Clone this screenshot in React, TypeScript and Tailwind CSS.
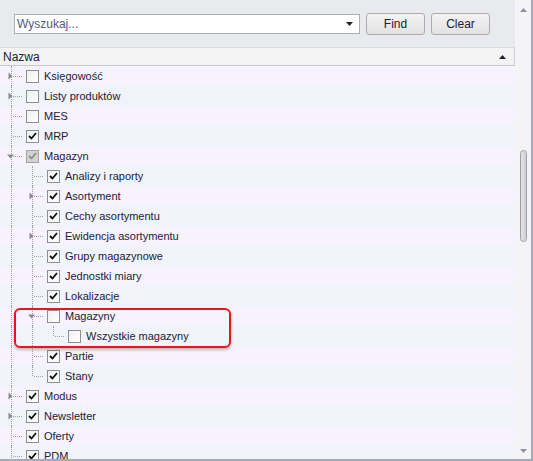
import React from "react";

type Row = {
  label: string;
  level: number;
  exp?: "c" | "o";
  chk: "on" | "off" | "gray";
  guides: boolean[]; // ancestor columns with a continuing vertical line
  last?: boolean;
};

const rows: Row[] = [
  { label: "Księgowość", level: 0, exp: "c", chk: "off", guides: [] },
  { label: "Listy produktów", level: 0, exp: "c", chk: "off", guides: [] },
  { label: "MES", level: 0, chk: "off", guides: [] },
  { label: "MRP", level: 0, chk: "on", guides: [] },
  { label: "Magazyn", level: 0, exp: "o", chk: "gray", guides: [] },
  { label: "Analizy i raporty", level: 1, chk: "on", guides: [true] },
  { label: "Asortyment", level: 1, exp: "c", chk: "on", guides: [true] },
  { label: "Cechy asortymentu", level: 1, chk: "on", guides: [true] },
  { label: "Ewidencja asortymentu", level: 1, exp: "c", chk: "on", guides: [true] },
  { label: "Grupy magazynowe", level: 1, chk: "on", guides: [true] },
  { label: "Jednostki miary", level: 1, chk: "on", guides: [true] },
  { label: "Lokalizacje", level: 1, chk: "on", guides: [true] },
  { label: "Magazyny", level: 1, exp: "o", chk: "off", guides: [true] },
  { label: "Wszystkie magazyny", level: 2, chk: "off", guides: [true, true], last: true },
  { label: "Partie", level: 1, chk: "on", guides: [true] },
  { label: "Stany", level: 1, chk: "on", guides: [true], last: true },
  { label: "Modus", level: 0, exp: "c", chk: "on", guides: [] },
  { label: "Newsletter", level: 0, exp: "c", chk: "on", guides: [] },
  { label: "Oferty", level: 0, chk: "on", guides: [] },
  { label: "PDM", level: 0, chk: "on", guides: [] },
];

function Check({ state }: { state: Row["chk"] }) {
  if (state === "gray") {
    return (
      <div className="w-[13px] h-[13px] border border-[#a3a3a3] bg-[#d2d2d2] flex items-center justify-center">
        <svg width="9" height="8" viewBox="0 0 9 8">
          <path d="M1 4 L3.5 6.5 L8 1" fill="none" stroke="#8c8c8c" strokeWidth="1.8" />
        </svg>
      </div>
    );
  }
  return (
    <div className="w-[13px] h-[13px] border border-[#8e8f8f] bg-gradient-to-br from-[#f0f0f0] to-white flex items-center justify-center">
      {state === "on" && (
        <svg width="9" height="8" viewBox="0 0 9 8">
          <path d="M1 4 L3.5 6.5 L8 1" fill="none" stroke="#111" strokeWidth="1.8" />
        </svg>
      )}
    </div>
  );
}

function Guide({ kind, exp }: { kind: "full" | "own" | "last" | "none"; exp?: "c" | "o" }) {
  return (
    <div className="relative w-[21px] h-full shrink-0">
      {kind === "full" && <div className="absolute left-[10px] top-0 bottom-0 border-l border-dotted border-[#a0a0a0]" />}
      {kind === "own" && <div className="absolute left-[10px] top-0 bottom-0 border-l border-dotted border-[#a0a0a0]" />}
      {kind === "last" && <div className="absolute left-[10px] top-0 h-[10px] border-l border-dotted border-[#a0a0a0]" />}
      {(kind === "own" || kind === "last") && (
        <div className="absolute left-[12px] right-0 top-[10px] border-t border-dotted border-[#a0a0a0]" />
      )}
      {exp === "c" && (
        <svg className="absolute left-[7px] top-[6px]" width="5" height="8" viewBox="0 0 5 8">
          <path d="M0.5 0.5 L4.5 4 L0.5 7.5 Z" fill="#8a8a8a" />
        </svg>
      )}
      {exp === "o" && (
        <svg className="absolute left-[6px] top-[8px]" width="7" height="5" viewBox="0 0 7 5">
          <path d="M0 0.5 L7 0.5 L3.5 4.5 Z" fill="#8a8a8a" />
        </svg>
      )}
    </div>
  );
}

export default function App() {
  return (
    <div className="w-[533px] h-[461px] flex overflow-hidden border-r-2 border-b-2 border-[#a6a9ba] bg-[#f4f4f6] font-['Liberation_Sans',Arial,sans-serif] text-[11px] text-[#1e2036]">
      <div className="w-[515px] flex flex-col shrink-0">
        {/* search panel */}
        <div className="h-[47px] bg-[#e9eaee] flex items-start pl-[14px] pt-[13px] gap-[6px]">
          <div className="mt-[1px] w-[346px] h-[20px] bg-white border border-[#abadb3] flex items-center pl-[2px] pr-[6px]">
            <span className="flex-1 text-[12px] text-[#55597a]">Wyszukaj...</span>
            <svg width="7" height="4" viewBox="0 0 7 4">
              <path d="M0 0 L7 0 L3.5 4 Z" fill="#222" />
            </svg>
          </div>
          <button className="w-[59px] h-[22px] rounded-[3px] border border-[#acacac] bg-gradient-to-b from-[#f3f3f3] to-[#e2e2e2] text-[12px] text-[#1e2036]">
            Find
          </button>
          <button className="w-[59px] h-[22px] rounded-[3px] border border-[#acacac] bg-gradient-to-b from-[#f3f3f3] to-[#e2e2e2] text-[12px] text-[#1e2036]">
            Clear
          </button>
        </div>
        {/* header */}
        <div className="h-[19px] bg-[#f3f3f4] border-t border-b border-r border-t-[#dcdce2] border-b-[#c6c6d0] border-r-[#d0d0d8] flex items-center pl-[3px] pr-[8px]">
          <span className="flex-1 text-[12px]">Nazwa</span>
          <svg width="7" height="4" viewBox="0 0 7 4">
            <path d="M0 4 L7 4 L3.5 0 Z" fill="#1e2036" />
          </svg>
        </div>
        {/* tree */}
        <div className="relative flex-1 overflow-hidden">
          {rows.map((r, i) => (
            <div
              key={i}
              className={`h-[20px] flex items-center pl-[1px] ${i % 2 === 0 ? "bg-[#f6f3fe]" : "bg-[#f0f3f9]"}`}
            >
              {r.guides.map((g, j) => (
                <Guide key={j} kind={g ? "full" : "none"} />
              ))}
              <Guide kind={r.last ? "last" : "own"} exp={r.exp} />
              <div className="ml-[4px] mr-[5px]">
                <Check state={r.chk} />
              </div>
              <span className="text-[11px] whitespace-nowrap">{r.label}</span>
            </div>
          ))}
          <div className="absolute left-[14px] top-[242px] w-[217px] h-[40px] rounded-[6px] border-2 border-[#e8161c] shadow-[0_2px_3px_rgba(0,0,0,0.25)]" />
        </div>
      </div>
      {/* scrollbar */}
      <div className="w-[16px] flex flex-col items-center bg-[#f4f4f6] pt-[8px] pb-[6px]">
        <svg width="7" height="4" viewBox="0 0 7 4">
          <path d="M0 4 L7 4 L3.5 0 Z" fill="#8f91a0" />
        </svg>
        <div className="mt-[138px] ml-[1px] w-[7px] h-[92px] rounded-full border border-[#9d9ea8] bg-gradient-to-r from-[#e3e3e8] to-[#cfcfd6]" />
        <div className="flex-1" />
        <svg width="7" height="4" viewBox="0 0 7 4">
          <path d="M0 0 L7 0 L3.5 4 Z" fill="#8f91a0" />
        </svg>
      </div>
    </div>
  );
}
